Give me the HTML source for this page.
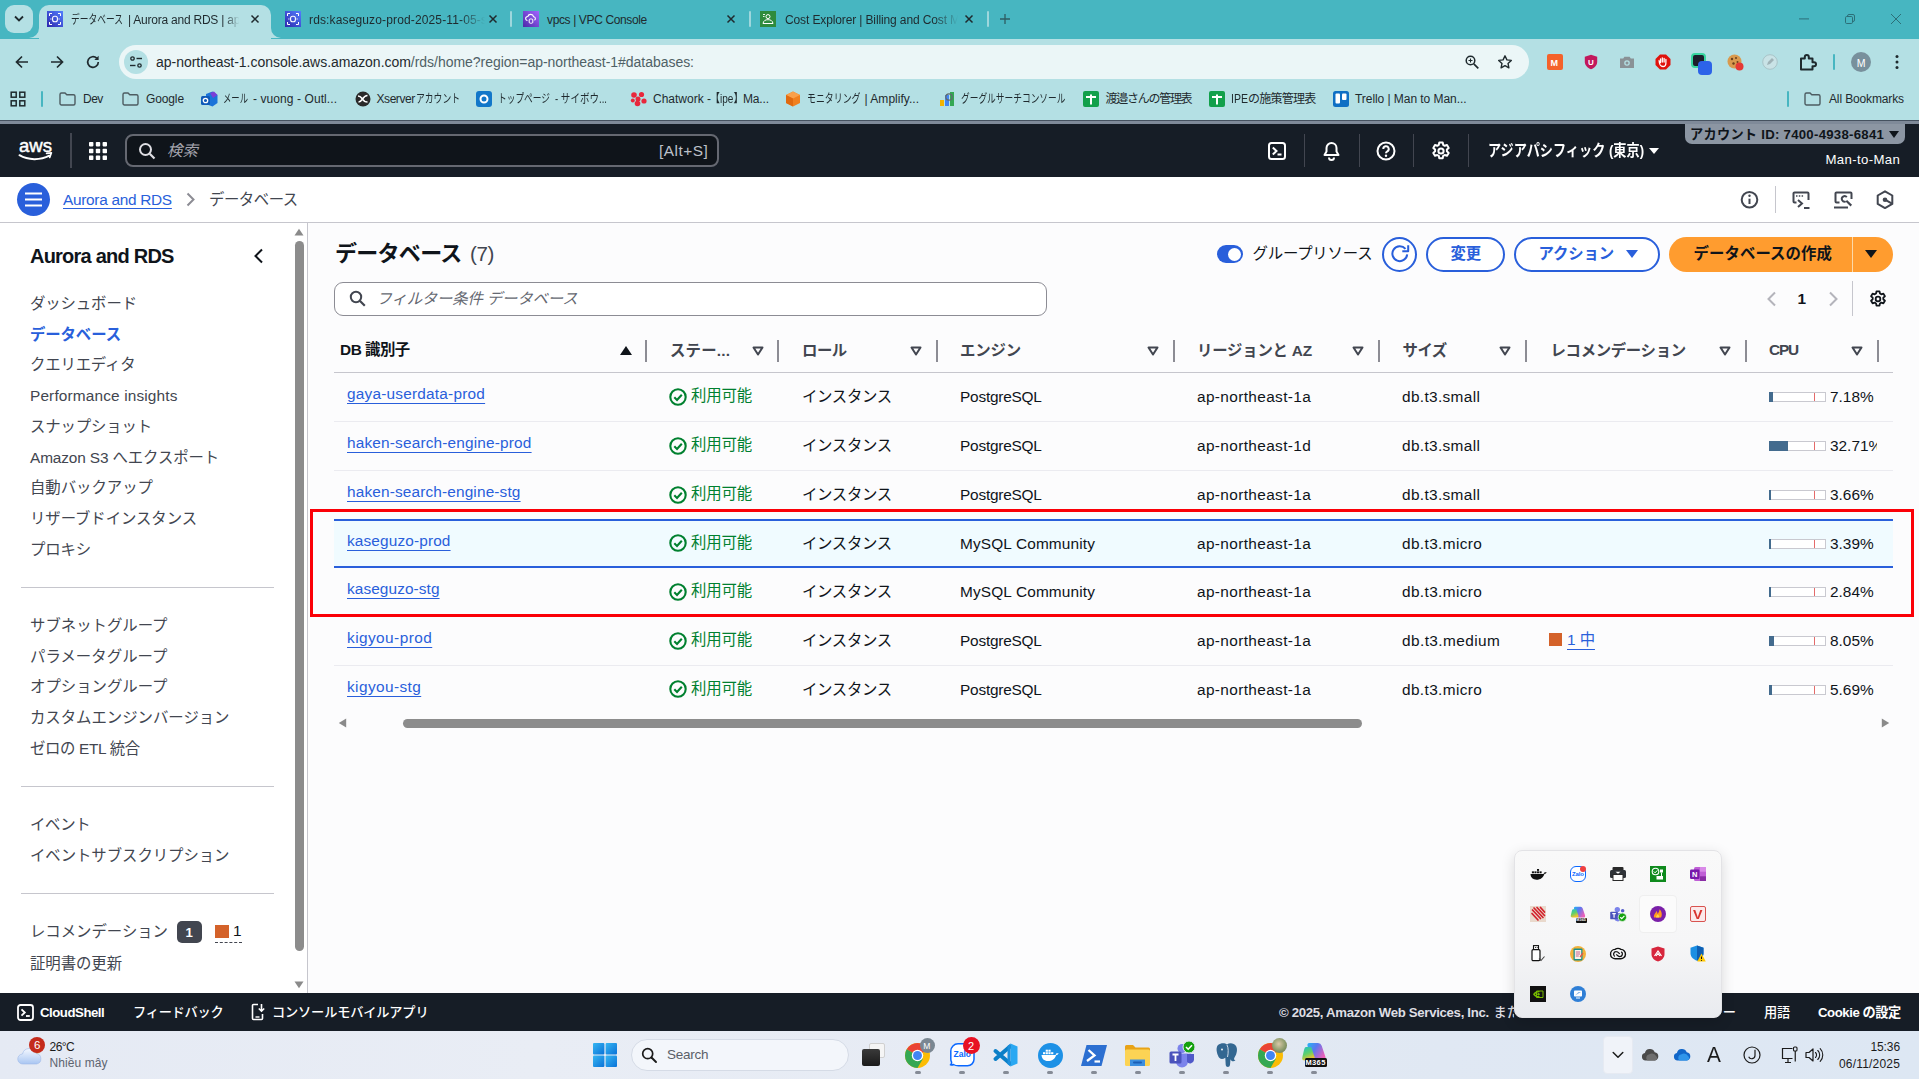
<!DOCTYPE html>
<html lang="ja">
<head>
<meta charset="utf-8">
<title>データベース | Aurora and RDS | ap-northeast-1</title>
<style>
*{box-sizing:border-box;margin:0;padding:0}
html,body{width:1919px;height:1079px;overflow:hidden;background:#fcfcfd}
body{font-family:"Liberation Sans","Noto Sans CJK JP",sans-serif;font-size:14px;color:#0f141a;position:relative}
.abs{position:absolute}
.t{position:absolute;white-space:nowrap}
.u{text-decoration:underline;text-decoration-thickness:1px;text-underline-offset:3px}
svg{position:absolute;overflow:visible}
#tabstrip{left:0;top:0;width:1919px;height:38.600px;background:#47b6c1}
#toolbar{left:0;top:38.600px;width:1919px;height:81.400px;background:#b4e0e4}
#chromeline{left:0;top:120px;width:1919px;height:4px;background:#7f8a99;border-top:1px solid #465260}
#activetab{left:39px;top:5px;width:232px;height:34px;background:#b4e0e4;border-radius:10px 10px 0 0}
#tabsearch{left:5px;top:5px;width:28px;height:28px;border-radius:9px;background:#b4e0e4}
#urlbar{left:119px;top:45px;width:1410px;height:34px;border-radius:17px;background:#ebf6f7}
#sitechip{left:124px;top:50px;width:24px;height:24px;border-radius:12px;background:#b4e0e4}
.tsep{position:absolute;top:11px;width:2px;height:16px;background:#b4e0e4;border-radius:1px;opacity:.8}
.bsep{position:absolute;width:2px;height:16px;background:#47b6c1;border-radius:1px}
#awsnav{left:0;top:124px;width:1919px;height:53px;background:#161d26}
#crumbbar{left:0;top:177px;width:1919px;height:45px;background:#fff}
#crumbline{left:0;top:221.800px;width:1919px;height:1px;background:#c6c6cd}
#sidebar{left:0;top:222px;width:307px;height:771px;background:#fff}
#sbline{left:307px;top:222px;width:1px;height:771px;background:#c6c6cd}
#main{left:308px;top:222px;width:1611px;height:771px;background:#fcfcfd}
#awsfoot{left:0;top:993px;width:1919px;height:38px;background:#161d26}
#taskbar{left:0;top:1031px;width:1919px;height:48px;background:linear-gradient(90deg,#e5eaf4 0%,#e9edf5 28%,#e6ebf4 50%,#e0e8f3 75%,#dde7f3 100%)}
.hline{position:absolute;height:1px;background:#c6c6cd}
.vsep{position:absolute;width:2px;background:#8c8c94}
.rowline{position:absolute;left:334px;width:1559px;height:1px;background:#ebebf0}
.btn{position:absolute;height:35px;border:2px solid #295fdb;border-radius:17.500px;background:#fff}
</style>
</head>
<body>
<!-- ===== browser chrome ===== -->
<div class="abs" id="tabstrip"></div><div class="abs" id="toolbar"></div><div class="abs" id="activetab"></div>
<svg style="left:29px;top:28px" width="10" height="10" viewBox="0 0 10 10"><path d="M10 0v10H0A10 10 0 0 0 10 0z" fill="#b4e0e4"/></svg>
<svg style="left:271px;top:28px" width="10" height="10" viewBox="0 0 10 10"><path d="M0 0v10h10A10 10 0 0 1 0 0z" fill="#b4e0e4"/></svg>
<div class="abs" id="tabsearch"></div><div class="abs" id="urlbar"></div><div class="abs" id="sitechip"></div><div class="abs" id="chromeline"></div>
<svg width="0" height="0"><defs><linearGradient id="gr1" x1="0" y1="1" x2="1" y2="0"><stop offset="0" stop-color="#2e27ad"/><stop offset="1" stop-color="#527fff"/></linearGradient><linearGradient id="gr2" x1="0" y1="1" x2="1" y2="0"><stop offset="0" stop-color="#4d27a8"/><stop offset="1" stop-color="#a166ff"/></linearGradient></defs></svg>
<svg style="left:13px;top:14px" width="12" height="10" viewBox="0 0 12 10"><path d="M2 2.500L6 6.500 10 2.500" fill="none" stroke="#1f2a2e" stroke-width="1.800"/></svg>
<svg style="left:47px;top:11px" width="16" height="16" viewBox="0 0 16 16"><rect width="16" height="16" fill="url(#gr1)"/><rect x="5.6" y="5.3" width="4.8" height="5.4" rx="2" fill="none" stroke="#fff" stroke-width="1.1"/><path d="M2.5 5V2.500H5M11 2.500h2.500V5M13.500 11v2.500H11M5 13.500H2.500V11" fill="none" stroke="#fff" stroke-width="1"/><path d="M3.300 8h1.200M11.500 8h1.200" stroke="#fff" stroke-width="1"/></svg>
<div class="t" style="left:71px;top:11.6px;font-size:12px;line-height:16px;color:#1f2a2e;transform:scaleX(0.7282);transform-origin:0 50%;">データベース</div><div class="t" style="left:128px;top:11.6px;font-size:12px;line-height:16px;color:#1f2a2e;letter-spacing:-0.231px;-webkit-mask-image:linear-gradient(90deg,#000 84%,transparent 96%);mask-image:linear-gradient(90deg,#000 84%,transparent 96%);">| Aurora and RDS | ap-</div><svg style="left:250px;top:14px" width="10" height="10" viewBox="0 0 10 10"><path d="M1.5 1.5l7 7M8.5 1.5l-7 7" stroke="#1f2a2e" stroke-width="1.5"/></svg>
<svg style="left:285px;top:11px" width="16" height="16" viewBox="0 0 16 16"><rect width="16" height="16" fill="url(#gr1)"/><rect x="5.6" y="5.3" width="4.8" height="5.4" rx="2" fill="none" stroke="#fff" stroke-width="1.1"/><path d="M2.5 5V2.500H5M11 2.500h2.500V5M13.500 11v2.500H11M5 13.500H2.500V11" fill="none" stroke="#fff" stroke-width="1"/><path d="M3.300 8h1.200M11.500 8h1.200" stroke="#fff" stroke-width="1"/></svg>
<div class="t" style="left:309px;top:11.6px;font-size:12px;line-height:16px;color:#1f2a2e;letter-spacing:0.140px;-webkit-mask-image:linear-gradient(90deg,#000 85%,transparent 99%);mask-image:linear-gradient(90deg,#000 85%,transparent 99%);overflow:hidden;">rds:kaseguzo-prod-2025-11-05-s</div><svg style="left:488px;top:14px" width="10" height="10" viewBox="0 0 10 10"><path d="M1.5 1.5l7 7M8.5 1.5l-7 7" stroke="#1f2a2e" stroke-width="1.5"/></svg>
<div class="tsep" style="left:510px"></div>
<svg style="left:523px;top:11px" width="16" height="16" viewBox="0 0 16 16"><rect width="16" height="16" fill="url(#gr2)"/><path d="M4.500 9.500a2 2 0 0 1 .3-4 3 3 0 0 1 5.800.3 1.900 1.900 0 0 1 .9 3.500" fill="none" stroke="#fff" stroke-width="1.100"/><rect x="6.200" y="8" width="3.600" height="4.200" rx="1" fill="none" stroke="#fff" stroke-width="1"/></svg>
<div class="t" style="left:547px;top:11.6px;font-size:12px;line-height:16px;color:#1f2a2e;letter-spacing:-0.371px;">vpcs | VPC Console</div><svg style="left:726px;top:14px" width="10" height="10" viewBox="0 0 10 10"><path d="M1.5 1.5l7 7M8.5 1.5l-7 7" stroke="#1f2a2e" stroke-width="1.5"/></svg>
<div class="tsep" style="left:749px"></div>
<svg style="left:760px;top:11px" width="16" height="16" viewBox="0 0 16 16"><rect width="16" height="16" fill="#2e8b3d"/><circle cx="8" cy="5.600" r="2" fill="none" stroke="#fff" stroke-width="1"/><path d="M3 12.500c.5-3 2.500-3.800 5-3.800s4.500.8 5 3.800z" fill="none" stroke="#fff" stroke-width="1"/><path d="M3 3.500h2M3 5.500h1.500" stroke="#fff" stroke-width=".9"/></svg>
<div class="t" style="left:785px;top:11.6px;font-size:12px;line-height:16px;color:#1f2a2e;letter-spacing:-0.125px;-webkit-mask-image:linear-gradient(90deg,#000 85%,transparent 99%);mask-image:linear-gradient(90deg,#000 85%,transparent 99%);overflow:hidden;">Cost Explorer | Billing and Cost M</div><svg style="left:964px;top:14px" width="10" height="10" viewBox="0 0 10 10"><path d="M1.5 1.5l7 7M8.5 1.5l-7 7" stroke="#1f2a2e" stroke-width="1.5"/></svg>
<div class="tsep" style="left:987px"></div>
<svg style="left:999px;top:13px" width="12" height="12" viewBox="0 0 12 12"><path d="M6 1v10M1 6h10" stroke="#2f5d63" stroke-width="1.300"/></svg>
<svg style="left:1799px;top:18px" width="10" height="2" viewBox="0 0 10 2"><path d="M0 .9h10" stroke="#2c6f78" stroke-width="1"/></svg>
<svg style="left:1845px;top:14px" width="10" height="10" viewBox="0 0 10 10"><rect x=".5" y="2.500" width="7" height="7" rx="1.200" fill="none" stroke="#2c6f78" stroke-width="1"/><path d="M2.500 2.500V2A1.500 1.500 0 0 1 4 .5h4A1.500 1.500 0 0 1 9.500 2v4A1.500 1.500 0 0 1 8 7.500h-.5" fill="none" stroke="#2c6f78" stroke-width="1"/></svg>
<svg style="left:1891px;top:14px" width="10" height="10" viewBox="0 0 10 10"><path d="M0 0l10 10M10 0L0 10" stroke="#2c6f78" stroke-width="1"/></svg>
<svg style="left:14px;top:54px" width="16" height="16" viewBox="0 0 16 16"><path d="M14 8H2.500M8 2.500L2.500 8 8 13.500" fill="none" stroke="#1f2a2e" stroke-width="1.700"/></svg>
<svg style="left:49px;top:54px" width="16" height="16" viewBox="0 0 16 16"><path d="M2 8h11.500M8 2.500L13.500 8 8 13.500" fill="none" stroke="#1f2a2e" stroke-width="1.700"/></svg>
<svg style="left:85px;top:54px" width="16" height="16" viewBox="0 0 16 16"><path d="M13.300 8A5.300 5.300 0 1 1 11.700 4.200" fill="none" stroke="#1f2a2e" stroke-width="1.700"/><path d="M13.600 1.800v4.200H9.400z" fill="#1f2a2e"/></svg>
<svg style="left:129px;top:55px" width="14" height="14" viewBox="0 0 14 14"><circle cx="3.500" cy="3.500" r="1.700" fill="none" stroke="#1f2a2e" stroke-width="1.300"/><path d="M7.500 3.500H13" stroke="#1f2a2e" stroke-width="1.400"/><circle cx="10.500" cy="10.500" r="1.700" fill="none" stroke="#1f2a2e" stroke-width="1.300"/><path d="M1 10.500h5.500" stroke="#1f2a2e" stroke-width="1.400"/></svg>
<div class="t" style="left:156px;top:53.3px;font-size:14px;line-height:18px;color:#1f2a2e;letter-spacing:-0.032px;">ap-northeast-1.console.aws.amazon.com<span style="color:#4f6166">/rds/home?region=ap-northeast-1#databases:</span></div><svg style="left:1464px;top:54px" width="16" height="16" viewBox="0 0 16 16"><circle cx="6.500" cy="6.500" r="4.300" fill="none" stroke="#1f2a2e" stroke-width="1.500"/><path d="M9.800 9.800l4.500 4.500" stroke="#1f2a2e" stroke-width="1.700"/><path d="M4.500 6.500h4M6.500 4.500v4" stroke="#1f2a2e" stroke-width="1.100"/></svg>
<svg style="left:1497px;top:54px" width="16" height="16" viewBox="0 0 16 16"><path d="M8 1.800l1.900 4.100 4.400.5-3.300 3 .9 4.400L8 11.600l-3.900 2.200.9-4.400-3.300-3 4.400-.5z" fill="none" stroke="#1f2a2e" stroke-width="1.400" stroke-linejoin="round"/></svg>
<div class="abs" style="left:1547px;top:54px;width:16px;height:16px;background:#f4622a;border-radius:2px"></div>
<div class="t" style="left:1550.5px;top:56.7px;font-size:9px;line-height:12px;color:#fff;font-weight:bold;">M</div><svg style="left:1583px;top:54px" width="16" height="16" viewBox="0 0 16 16"><path d="M8 .8l6.200 2v5c0 3.600-2.600 6.200-6.200 7.500C4.400 14 1.800 11.400 1.800 7.800v-5z" fill="#c2185b"/><text x="8" y="11" font-size="8" font-weight="bold" fill="#fff" text-anchor="middle" font-family="Liberation Sans, sans-serif">U</text></svg>
<svg style="left:1619px;top:55px" width="16" height="14" viewBox="0 0 16 14"><path d="M1 3.500h3.200L5.400 1.800h5.200l1.200 1.700H15v9.500H1z" fill="#8a9296"/><circle cx="8" cy="8" r="2.800" fill="#b4e0e4"/><circle cx="8" cy="8" r="1.500" fill="#8a9296"/></svg>
<svg style="left:1655px;top:54px" width="16" height="16" viewBox="0 0 16 16"><path d="M5 .5h6L15.500 5v6L11 15.500H5L.5 11V5z" fill="#e0120c"/><path d="M5.500 8.500V5M7.300 8V3.800M9.100 8V4.300M10.900 8.500V5.500M5.500 8L4.200 7c0 3 1.500 5.500 3.800 5.500 2 0 2.900-1.500 2.900-3.500" fill="none" stroke="#fff" stroke-width="1.300" stroke-linecap="round"/></svg>
<div class="abs" style="left:1691px;top:53px;width:15px;height:15px;border-radius:4px;background:#1d1d2b;border:2px solid #38d6a0"></div>
<div class="abs" style="left:1698px;top:61px;width:14px;height:14px;border-radius:4px;background:#2c63e8"></div>
<svg style="left:1727px;top:54px" width="17" height="17" viewBox="0 0 17 17"><circle cx="7.500" cy="7.500" r="7" fill="#d99a4e"/><circle cx="5" cy="5" r="1.200" fill="#6b3f1c"/><circle cx="9" cy="4" r="1" fill="#6b3f1c"/><circle cx="6.500" cy="9.500" r="1.200" fill="#6b3f1c"/><circle cx="10.500" cy="8" r="1" fill="#6b3f1c"/><circle cx="12.500" cy="12.500" r="4" fill="#e53935"/></svg>
<svg style="left:1762px;top:54px" width="16" height="16" viewBox="0 0 16 16"><circle cx="8" cy="8" r="7.300" fill="#c9e3e6" stroke="#a9c4c8" stroke-width="1"/><path d="M5 11l1-3 4-4 2 2-4 4z" fill="#9fb3b7"/></svg>
<svg style="left:1798px;top:52px" width="19" height="19" viewBox="0 0 19 19"><path d="M3 6.500h3.800V5a2 2 0 0 1 4 0v1.500h3.700v3.800H16a2 2 0 0 1 0 4h-1.500V17.500H3V6.500z" fill="none" stroke="#1f2a2e" stroke-width="2" stroke-linejoin="round"/></svg>
<div class="bsep" style="left:1833px;top:54px"></div>
<div class="abs" style="left:1851px;top:52px;width:20px;height:20px;border-radius:10px;background:#78909c"></div>
<div class="t" style="left:1856.7px;top:55.5px;font-size:10.5px;line-height:14px;color:#fff;">M</div><svg style="left:1895px;top:54px" width="4" height="16" viewBox="0 0 4 16"><circle cx="2" cy="2.500" r="1.500" fill="#1f2a2e"/><circle cx="2" cy="8" r="1.500" fill="#1f2a2e"/><circle cx="2" cy="13.500" r="1.500" fill="#1f2a2e"/></svg>
<svg style="left:10px;top:91px" width="16" height="16" viewBox="0 0 16 16"><g fill="none" stroke="#1f2a2e" stroke-width="1.500"><rect x="1.200" y="1.200" width="5" height="5"/><rect x="9.800" y="1.200" width="5" height="5"/><rect x="1.200" y="9.800" width="5" height="5"/><rect x="9.800" y="9.800" width="5" height="5"/></g></svg>
<div class="bsep" style="left:41px;top:91px"></div>
<svg style="left:59px;top:92px" width="17" height="14" viewBox="0 0 17 14"><path d="M1 2.500a1.500 1.500 0 0 1 1.500-1.500H6l1.800 1.800h6.700A1.500 1.500 0 0 1 16 4.300v7.200A1.500 1.500 0 0 1 14.500 13h-12A1.500 1.500 0 0 1 1 11.500z" fill="none" stroke="#4d5c61" stroke-width="1.400"/></svg>
<div class="t" style="left:83px;top:91.4px;font-size:12px;line-height:16px;color:#1f2a2e;letter-spacing:-0.537px;">Dev</div><svg style="left:122px;top:92px" width="17" height="14" viewBox="0 0 17 14"><path d="M1 2.500a1.500 1.500 0 0 1 1.500-1.500H6l1.800 1.800h6.700A1.500 1.500 0 0 1 16 4.300v7.200A1.500 1.500 0 0 1 14.500 13h-12A1.500 1.500 0 0 1 1 11.500z" fill="none" stroke="#4d5c61" stroke-width="1.400"/></svg>
<div class="t" style="left:146px;top:91.4px;font-size:12px;line-height:16px;color:#1f2a2e;letter-spacing:-0.128px;">Google</div><svg style="left:201px;top:91px" width="17" height="16" viewBox="0 0 17 16"><path d="M5 3l6.500-2.500L16.500 4v8l-5 3.500L5 13z" fill="#1a73d9"/><path d="M9 2l4-1.500L16.500 4 12 7z" fill="#7b3fd6"/><rect x="0" y="5" width="9" height="9" rx="1.500" fill="#0f5ab8"/><circle cx="4.500" cy="9.500" r="2.200" fill="none" stroke="#fff" stroke-width="1.300"/></svg>
<div class="t" style="left:223px;top:91.4px;font-size:12px;line-height:16px;color:#1f2a2e;transform:scaleX(0.6941);transform-origin:0 50%;">メール</div><div class="t" style="left:253px;top:91.4px;font-size:12px;line-height:16px;color:#1f2a2e;letter-spacing:0.079px;">- vuong - Outl...</div><svg style="left:355px;top:91px" width="16" height="16" viewBox="0 0 16 16"><circle cx="8" cy="8" r="7.500" fill="#2a2a2a"/><path d="M3 5c2 0 3 1 4 2.500S9 11 12.500 11M3.500 11c2 0 3-1.500 4-3S10 4.500 12.500 4.500" fill="none" stroke="#fff" stroke-width="1.600"/></svg>
<div class="t" style="left:376.5px;top:91.4px;font-size:12px;line-height:16px;color:#1f2a2e;letter-spacing:-0.438px;">Xserver</div><div class="t" style="left:415.5px;top:91.4px;font-size:12px;line-height:16px;color:#1f2a2e;transform:scaleX(0.7331);transform-origin:0 50%;">アカウント</div><svg style="left:476px;top:91px" width="16" height="16" viewBox="0 0 16 16"><rect width="16" height="16" rx="3" fill="#1277c9"/><circle cx="8" cy="8" r="3.500" fill="none" stroke="#fff" stroke-width="2"/></svg>
<div class="t" style="left:498px;top:91.4px;font-size:12px;line-height:16px;color:#1f2a2e;transform:scaleX(0.7246);transform-origin:0 50%;">トップページ</div><div class="t" style="left:555px;top:91.4px;font-size:12px;line-height:16px;color:#1f2a2e;transform:scaleX(0.7958);transform-origin:0 50%;">- サイボウ...</div><svg style="left:630px;top:91px" width="17" height="16" viewBox="0 0 17 16"><g fill="#e8283c"><circle cx="4" cy="4" r="2.800"/><circle cx="11.500" cy="3.500" r="2.600"/><circle cx="14" cy="10" r="2.600"/><circle cx="7.500" cy="12.500" r="2.800"/><circle cx="2.800" cy="9.500" r="2"/><circle cx="8" cy="8" r="2.500"/></g></svg>
<div class="t" style="left:653px;top:91.4px;font-size:12px;line-height:16px;color:#1f2a2e;letter-spacing:-0.002px;">Chatwork -</div><div class="t" style="left:710px;top:91.4px;font-size:12px;line-height:16px;color:#1f2a2e;transform:scaleX(0.8372);transform-origin:0 50%;">【ipe】</div><div class="t" style="left:743px;top:91.4px;font-size:12px;line-height:16px;color:#1f2a2e;letter-spacing:-0.149px;">Ma...</div><svg style="left:785px;top:91px" width="16" height="16" viewBox="0 0 16 16"><path d="M8 .5l7 3.500v8L8 15.500 1 12V4z" fill="#f0801f"/><path d="M8 .5l7 3.500-7 3.500L1 4z" fill="#f9a04a"/><path d="M8 7.500v8L1 12V4z" fill="#e06a10"/></svg>
<div class="t" style="left:806.5px;top:91.4px;font-size:12px;line-height:16px;color:#1f2a2e;transform:scaleX(0.7429);transform-origin:0 50%;">モニタリング</div><div class="t" style="left:864.5px;top:91.4px;font-size:12px;line-height:16px;color:#1f2a2e;letter-spacing:0.022px;">| Amplify...</div><svg style="left:939px;top:91px" width="17" height="16" viewBox="0 0 17 16"><rect x="1" y="9" width="4" height="6" fill="#f4b400"/><rect x="6" y="4" width="4" height="11" fill="#4285f4"/><rect x="11" y="1" width="4" height="14" fill="#34a853"/><circle cx="10" cy="6" r="3.200" fill="none" stroke="#5f6b70" stroke-width="1.300"/></svg>
<div class="t" style="left:960.5px;top:91.4px;font-size:12px;line-height:16px;color:#1f2a2e;transform:scaleX(0.7256);transform-origin:0 50%;">グーグルサーチコンソール</div><svg style="left:1083px;top:91px" width="16" height="16" viewBox="0 0 16 16"><rect width="16" height="16" rx="2" fill="#12a04b"/><path d="M3 6h10M8 3.500v10" stroke="#fff" stroke-width="2"/></svg>
<div class="t" style="left:1105.5px;top:91.4px;font-size:12px;line-height:16px;color:#1f2a2e;letter-spacing:-1.269px;">渡邉さんの管理表</div><svg style="left:1209px;top:91px" width="16" height="16" viewBox="0 0 16 16"><rect width="16" height="16" rx="2" fill="#12a04b"/><path d="M3 6h10M8 3.500v10" stroke="#fff" stroke-width="2"/></svg>
<div class="t" style="left:1231px;top:91.4px;font-size:12px;line-height:16px;color:#1f2a2e;transform:scaleX(0.8788);transform-origin:0 50%;">IPE</div><div class="t" style="left:1248px;top:91.4px;font-size:12px;line-height:16px;color:#1f2a2e;letter-spacing:-0.730px;">の施策管理表</div><svg style="left:1333px;top:91px" width="16" height="16" viewBox="0 0 16 16"><rect width="16" height="16" rx="2.500" fill="#0e6fc4"/><rect x="2.500" y="2.500" width="4.500" height="10" rx="1" fill="#fff"/><rect x="9" y="2.500" width="4.500" height="6.500" rx="1" fill="#fff"/></svg>
<div class="t" style="left:1355px;top:91.4px;font-size:12px;line-height:16px;color:#1f2a2e;letter-spacing:-0.057px;">Trello | Man to Man...</div><div class="bsep" style="left:1787px;top:91px"></div>
<svg style="left:1804px;top:92px" width="17" height="14" viewBox="0 0 17 14"><path d="M1 2.500a1.500 1.500 0 0 1 1.500-1.500H6l1.800 1.800h6.700A1.500 1.500 0 0 1 16 4.300v7.200A1.500 1.500 0 0 1 14.500 13h-12A1.500 1.500 0 0 1 1 11.500z" fill="none" stroke="#4d5c61" stroke-width="1.400"/></svg>
<div class="t" style="left:1829px;top:91.4px;font-size:12px;line-height:16px;color:#1f2a2e;letter-spacing:-0.135px;">All Bookmarks</div><!-- ===== AWS console ===== -->
<div class="abs" id="awsnav"></div><div class="abs" id="crumbbar"></div><div class="abs" id="sidebar"></div><div class="abs" id="sbline"></div><div class="abs" id="main"></div><div class="abs" id="crumbline"></div>
<svg style="left:18px;top:138px" width="36" height="24" viewBox="0 0 36 24"><text x="1" y="13.500" font-family="Liberation Sans, sans-serif" font-size="18" fill="#fff" stroke="#fff" stroke-width=".45" textLength="33" lengthAdjust="spacingAndGlyphs">aws</text><path d="M1.500 17.200c8.500 5.200 21 5.200 29.800 0.500" fill="none" stroke="#fff" stroke-width="2" stroke-linecap="round"/><path d="M28.600 15.300l4.800-.5-1.700 4.600" fill="none" stroke="#fff" stroke-width="1.700" stroke-linecap="round" stroke-linejoin="round"/></svg>
<div class="abs" style="left:70px;top:133px;width:2px;height:35px;background:#424650"></div>
<svg style="left:89px;top:142px" width="18" height="18" viewBox="0 0 18 18"><rect x="0" y="0" width="4.400" height="4.400" rx=".8" fill="#fff"/><rect x="6.8" y="0" width="4.400" height="4.400" rx=".8" fill="#fff"/><rect x="13.6" y="0" width="4.400" height="4.400" rx=".8" fill="#fff"/><rect x="0" y="6.8" width="4.400" height="4.400" rx=".8" fill="#fff"/><rect x="6.8" y="6.8" width="4.400" height="4.400" rx=".8" fill="#fff"/><rect x="13.6" y="6.8" width="4.400" height="4.400" rx=".8" fill="#fff"/><rect x="0" y="13.6" width="4.400" height="4.400" rx=".8" fill="#fff"/><rect x="6.8" y="13.6" width="4.400" height="4.400" rx=".8" fill="#fff"/><rect x="13.6" y="13.6" width="4.400" height="4.400" rx=".8" fill="#fff"/></svg>
<div class="abs" style="left:125px;top:134px;width:594px;height:33px;border:2px solid #656871;border-radius:8px;background:#0f141a"></div>
<svg style="left:138px;top:142px" width="18" height="18" viewBox="0 0 18 18"><circle cx="7.500" cy="7.500" r="5.500" fill="none" stroke="#dedee3" stroke-width="2"/><path d="M11.700 11.700l4.800 4.800" stroke="#dedee3" stroke-width="2.200"/></svg>
<div class="t" style="left:167px;top:140.8px;font-size:15.4px;line-height:20px;color:#a4a4ad;font-style:italic;letter-spacing:0.135px;">検索</div><div class="t" style="left:659px;top:140.8px;font-size:15.4px;line-height:20px;color:#bcc0c9;letter-spacing:0.495px;">[Alt+S]</div><svg style="left:1268px;top:142px" width="18" height="18" viewBox="0 0 18 18"><rect x="1" y="1" width="16" height="16" rx="2.500" fill="none" stroke="#fff" stroke-width="2"/><path d="M4.800 5.500l3.700 3.500-3.700 3.500" fill="none" stroke="#fff" stroke-width="2"/><path d="M9.500 12.500h4" stroke="#fff" stroke-width="2"/></svg>
<div class="abs" style="left:1304px;top:134px;width:1px;height:33px;background:#424650"></div>
<div class="abs" style="left:1359px;top:134px;width:1px;height:33px;background:#424650"></div>
<div class="abs" style="left:1413px;top:134px;width:1px;height:33px;background:#424650"></div>
<div class="abs" style="left:1468px;top:134px;width:1px;height:33px;background:#424650"></div>
<svg style="left:1322px;top:141px" width="19" height="20" viewBox="0 0 19 20"><path d="M9.500 2a5 5 0 0 0-5 5v3.500L2.500 14h14l-2-3.500V7a5 5 0 0 0-5-5z" fill="none" stroke="#fff" stroke-width="2" stroke-linejoin="round"/><path d="M7 16.500a2.500 2.500 0 0 0 5 0" fill="none" stroke="#fff" stroke-width="2"/></svg>
<svg style="left:1376px;top:141px" width="20" height="20" viewBox="0 0 20 20"><circle cx="10" cy="10" r="8.500" fill="none" stroke="#fff" stroke-width="2"/><path d="M7.300 8a2.700 2.700 0 1 1 4 2.300c-.9.500-1.300 1-1.300 2" fill="none" stroke="#fff" stroke-width="2"/><circle cx="10" cy="14.800" r="1.200" fill="#fff"/></svg>
<svg style="left:1430.5px;top:141px" width="20" height="20" viewBox="0 0 20 20"><path d="M8.300 1.500h3.400l.5 2.400 1.500.9 2.300-.8 1.700 2.900-1.800 1.600v1.800l1.800 1.600-1.700 2.900-2.300-.8-1.500.9-.5 2.400H8.300l-.5-2.400-1.500-.9-2.300.8-1.700-2.900 1.800-1.600V8.500L2.300 6.900 4 4l2.300.8 1.500-.9z" fill="none" stroke="#fff" stroke-width="2" stroke-linejoin="round"/><circle cx="10" cy="10" r="2.600" fill="none" stroke="#fff" stroke-width="2"/></svg>
<div class="t" style="left:1488px;top:141.3px;font-size:15.4px;line-height:20px;color:#fff;font-weight:bold;transform:scaleX(0.8544);transform-origin:0 50%;">アジアパシフィック (東京)</div><svg style="left:1648.5px;top:148px" width="10" height="6" viewBox="0 0 10 6"><path d="M0 0h10 L5 6 z" fill="#fff"/></svg>
<div class="abs" style="left:1685px;top:124px;width:220px;height:20px;background:#8c96a3;border-radius:0 0 7px 7px"></div>
<div class="t" style="left:1690px;top:126.1px;font-size:13.2px;line-height:17px;color:#0f141a;font-weight:bold;letter-spacing:0.271px;">アカウント ID: 7400-4938-6841</div><svg style="left:1889px;top:131px" width="10" height="7" viewBox="0 0 10 7"><path d="M0 0h10 L5 7 z" fill="#0f141a"/></svg>
<div class="t" style="left:1825.5px;top:151.3px;font-size:13.2px;line-height:17px;color:#fff;letter-spacing:0.359px;">Man-to-Man</div><div class="abs" style="left:17px;top:183px;width:33px;height:33px;border-radius:17px;background:#295fdb"></div>
<svg style="left:25px;top:192px" width="17" height="15" viewBox="0 0 17 15"><path d="M0 1.500h17M0 7.500h17M0 13.500h17" stroke="#fff" stroke-width="2.200"/></svg>
<div class="t u" style="left:63px;top:189.6px;font-size:15.4px;line-height:20px;color:#295fdb;letter-spacing:-0.291px;">Aurora and RDS</div><svg style="left:186px;top:192px" width="10" height="15" viewBox="0 0 10 15"><path d="M1.500 1.500l6 6-6 6" fill="none" stroke="#8c8c94" stroke-width="2"/></svg>
<div class="t" style="left:209px;top:189.6px;font-size:15.4px;line-height:20px;color:#424650;letter-spacing:-0.469px;">データベース</div><svg style="left:1739.800px;top:190px" width="19" height="19" viewBox="0 0 19 19"><circle cx="9.500" cy="9.700" r="7.800" fill="none" stroke="#424650" stroke-width="2"/><path d="M9.500 8.700v5.300" stroke="#424650" stroke-width="2"/><circle cx="9.500" cy="5.800" r="1.200" fill="#424650"/></svg>
<div class="abs" style="left:1775px;top:186px;width:1px;height:27px;background:#c6c6cd"></div>
<svg style="left:1791.800px;top:190.500px" width="18" height="19" viewBox="0 0 18 19"><path d="M4.500 11.500H2.500a1 1 0 0 1-1-1V2.500a1 1 0 0 1 1-1h13a1 1 0 0 1 1 1V9" fill="none" stroke="#424650" stroke-width="2"/><path d="M4 5h1.500M6.800 5h1.500M9.600 5h1.500" stroke="#424650" stroke-width="1.600"/><path d="M6 9l4 3.500-4 3.500" fill="none" stroke="#424650" stroke-width="2"/><path d="M12 17h5.500" stroke="#424650" stroke-width="2"/></svg>
<svg style="left:1834px;top:190.500px" width="19" height="19" viewBox="0 0 19 19"><path d="M5.500 11.500h-3a1 1 0 0 1-1-1v-8a1 1 0 0 1 1-1h14a1 1 0 0 1 1 1V8" fill="none" stroke="#424650" stroke-width="2"/><path d="M0 16.500h14" stroke="#424650" stroke-width="2"/><path d="M12.800 6.200a2.800 2.800 0 1 0-1 4.300" fill="none" stroke="#424650" stroke-width="1.900"/><path d="M12.300 9.800l5 4.800" stroke="#424650" stroke-width="2.200"/></svg>
<svg style="left:1876px;top:190px" width="18" height="19" viewBox="0 0 18 19"><path d="M9 1.300l7.300 4.200v8.400L9 18.100l-7.300-4.200V5.500z" fill="none" stroke="#424650" stroke-width="2" stroke-linejoin="round"/><circle cx="9" cy="9.700" r="2.300" fill="#424650"/><path d="M9 9.700l7 4" stroke="#424650" stroke-width="2"/></svg>
<div class="t" style="left:30px;top:242.6px;font-size:20px;line-height:26px;color:#0f141a;font-weight:bold;letter-spacing:-0.775px;">Aurora and RDS</div><svg style="left:253px;top:248px" width="11" height="16" viewBox="0 0 11 16"><path d="M9 1.500L2.500 8 9 14.500" fill="none" stroke="#0f141a" stroke-width="2"/></svg>
<div class="t" style="left:30px;top:294.1px;font-size:15.4px;line-height:20px;color:#424650;letter-spacing:-0.115px;">ダッシュボード</div><div class="t" style="left:30px;top:324.7px;font-size:15.4px;line-height:20px;color:#295fdb;font-weight:bold;letter-spacing:-0.105px;">データベース</div><div class="t" style="left:30px;top:355.3px;font-size:15.4px;line-height:20px;color:#424650;letter-spacing:-0.180px;">クエリエディタ</div><div class="t" style="left:30px;top:386.3px;font-size:15.4px;line-height:20px;color:#424650;letter-spacing:0.150px;">Performance insights</div><div class="t" style="left:30px;top:416.8px;font-size:15.4px;line-height:20px;color:#424650;letter-spacing:-0.152px;">スナップショット</div><div class="t" style="left:30px;top:448.1px;font-size:15.4px;line-height:20px;color:#424650;letter-spacing:-0.128px;">Amazon S3 へエクスポート</div><div class="t" style="left:30px;top:478.1px;font-size:15.4px;line-height:20px;color:#424650;letter-spacing:-0.019px;">自動バックアップ</div><div class="t" style="left:30px;top:508.9px;font-size:15.4px;line-height:20px;color:#424650;letter-spacing:-0.073px;">リザーブドインスタンス</div><div class="t" style="left:30px;top:539.8px;font-size:15.4px;line-height:20px;color:#424650;letter-spacing:-0.165px;">プロキシ</div><div class="t" style="left:30px;top:616.1px;font-size:15.4px;line-height:20px;color:#424650;letter-spacing:-0.011px;">サブネットグループ</div><div class="t" style="left:30px;top:646.8px;font-size:15.4px;line-height:20px;color:#424650;letter-spacing:0.042px;">パラメータグループ</div><div class="t" style="left:30px;top:677.4px;font-size:15.4px;line-height:20px;color:#424650;letter-spacing:-0.011px;">オプショングループ</div><div class="t" style="left:30px;top:708.1px;font-size:15.4px;line-height:20px;color:#424650;letter-spacing:-0.022px;">カスタムエンジンバージョン</div><div class="t" style="left:30px;top:739.1px;font-size:15.4px;line-height:20px;color:#424650;letter-spacing:-0.334px;">ゼロの ETL 統合</div><div class="t" style="left:30px;top:815.1px;font-size:15.4px;line-height:20px;color:#424650;letter-spacing:-0.308px;">イベント</div><div class="t" style="left:30px;top:846.1px;font-size:15.4px;line-height:20px;color:#424650;letter-spacing:-0.048px;">イベントサブスクリプション</div><div class="t" style="left:30px;top:922.1px;font-size:15.4px;line-height:20px;color:#424650;letter-spacing:-0.026px;">レコメンデーション</div><div class="t" style="left:30px;top:954.1px;font-size:15.4px;line-height:20px;color:#424650;letter-spacing:-0.065px;">証明書の更新</div><div class="hline" style="left:21px;top:587px;width:253px"></div>
<div class="hline" style="left:21px;top:786px;width:253px"></div>
<div class="hline" style="left:21px;top:893px;width:253px"></div>
<div class="abs" style="left:177px;top:921px;width:25px;height:22px;border-radius:5px;background:#424650"></div>
<div class="t" style="left:185.5px;top:923.8px;font-size:13.2px;line-height:17px;color:#fff;font-weight:bold;">1</div><div class="abs" style="left:215px;top:925px;width:14px;height:13px;background:#d4622a"></div>
<div class="t" style="left:233px;top:921.1px;font-size:15.4px;line-height:20px;color:#0f141a;">1</div><div class="abs" style="left:215px;top:942px;width:27px;height:0;border-top:1px dashed #424650"></div>
<svg style="left:294px;top:227.500px" width="10" height="8" viewBox="0 0 10 8"><path d="M5 .8L9.500 7.500h-9z" fill="#8a8a8a"/></svg>
<div class="abs" style="left:295px;top:241px;width:8.500px;height:710px;border-radius:4.500px;background:#8c8c8c"></div>
<svg style="left:294px;top:981px" width="10" height="8" viewBox="0 0 10 8"><path d="M5 7.200L.5.500h9z" fill="#8a8a8a"/></svg>
<div class="t" style="left:335px;top:238.7px;font-size:22px;line-height:29px;color:#0f141a;font-weight:bold;letter-spacing:-0.710px;">データベース</div><div class="t" style="left:470px;top:239.9px;font-size:20.5px;line-height:27px;color:#424650;letter-spacing:-0.425px;">(7)</div><div class="abs" style="left:1217px;top:245px;width:26px;height:18px;border-radius:9px;background:#295fdb"></div>
<div class="abs" style="left:1227.700px;top:247.500px;width:13.300px;height:13.300px;border-radius:7px;background:#fff"></div>
<div class="t" style="left:1252.5px;top:243.8px;font-size:15.4px;line-height:20px;color:#0f141a;letter-spacing:-0.192px;">グループリソース</div><div class="btn" style="left:1382px;top:237px;width:35px"></div>
<svg style="left:1390px;top:244px" width="20" height="20" viewBox="0 0 20 20"><path d="M17.170 10.350A7.400 7.400 0 1 1 15.470 4.940" fill="none" stroke="#295fdb" stroke-width="2"/><path d="M18.200 1.300V7.200H12.300" fill="none" stroke="#295fdb" stroke-width="2" stroke-linejoin="round"/></svg>
<div class="btn" style="left:1426px;top:237px;width:79px"></div>
<div class="t" style="left:1450.5px;top:243.8px;font-size:15.4px;line-height:20px;color:#295fdb;font-weight:bold;letter-spacing:-0.198px;">変更</div><div class="btn" style="left:1514px;top:237px;width:146px"></div>
<div class="t" style="left:1538.5px;top:243.8px;font-size:15.4px;line-height:20px;color:#295fdb;font-weight:bold;letter-spacing:-0.153px;">アクション</div><svg style="left:1625.5px;top:249.5px" width="12" height="8" viewBox="0 0 12 8"><path d="M0 0h12 L6 8 z" fill="#295fdb"/></svg>
<div class="abs" style="left:1669px;top:237px;width:182.500px;height:35px;border-radius:17.500px 0 0 17.500px;background:#ff9c2f"></div>
<div class="abs" style="left:1853px;top:237px;width:40px;height:35px;border-radius:0 17.500px 17.500px 0;background:#ff9c2f"></div>
<div class="abs" style="left:1851.500px;top:237px;width:1.500px;height:35px;background:#fcd9a8"></div>
<div class="t" style="left:1693.5px;top:243.8px;font-size:15.4px;line-height:20px;color:#0f141a;font-weight:bold;letter-spacing:0.088px;">データベースの作成</div><svg style="left:1865px;top:249.5px" width="12" height="8" viewBox="0 0 12 8"><path d="M0 0h12 L6 8 z" fill="#0f141a"/></svg>
<div class="abs" style="left:334px;top:281.500px;width:713px;height:34.500px;border:1px solid #8c8c94;border-radius:9px;background:#fff"></div>
<svg style="left:349px;top:290px" width="17" height="17" viewBox="0 0 17 17"><circle cx="7" cy="7" r="5.200" fill="none" stroke="#424650" stroke-width="2"/><path d="M11 11l4.800 4.800" stroke="#424650" stroke-width="2.200"/></svg>
<div class="t" style="left:376.5px;top:288.6px;font-size:15.4px;line-height:20px;color:#656871;font-style:italic;letter-spacing:-0.169px;">フィルター条件 データベース</div><svg style="left:1766px;top:290.500px" width="11" height="16" viewBox="0 0 11 16"><path d="M9 1.500L2.500 8 9 14.500" fill="none" stroke="#b4b4bb" stroke-width="2"/></svg>
<div class="t" style="left:1797.5px;top:288.6px;font-size:15.4px;line-height:20px;color:#0f141a;font-weight:bold;">1</div><svg style="left:1828px;top:290.500px" width="11" height="16" viewBox="0 0 11 16"><path d="M2 1.500L8.500 8 2 14.500" fill="none" stroke="#b4b4bb" stroke-width="2"/></svg>
<div class="abs" style="left:1852px;top:281px;width:1px;height:35px;background:#c6c6cd"></div>
<svg style="left:1868.5px;top:289.5px" width="18" height="18" viewBox="0 0 20 20"><path d="M8.300 1.500h3.400l.5 2.400 1.500.9 2.300-.8 1.700 2.900-1.800 1.600v1.800l1.800 1.600-1.700 2.900-2.300-.8-1.500.9-.5 2.400H8.300l-.5-2.400-1.500-.9-2.300.8-1.700-2.900 1.800-1.600V8.500L2.300 6.900 4 4l2.300.8 1.500-.9z" fill="none" stroke="#0f141a" stroke-width="2" stroke-linejoin="round"/><circle cx="10" cy="10" r="2.600" fill="none" stroke="#0f141a" stroke-width="2"/></svg>
<div class="t" style="left:340px;top:340.0px;font-size:15.4px;line-height:20px;color:#0f141a;font-weight:bold;letter-spacing:-0.489px;">DB 識別子</div><svg style="left:620px;top:345.5px" width="12" height="9" viewBox="0 0 12 9"><path d="M6 0L12 9H0z" fill="#0f141a"/></svg>
<div class="vsep" style="left:645px;top:340px;height:22px"></div>
<div class="t" style="left:670px;top:340.8px;font-size:15.4px;line-height:20px;color:#424650;font-weight:bold;letter-spacing:0.182px;">ステー...</div><svg style="left:752px;top:345.5px" width="12" height="10" viewBox="0 0 12 10"><path d="M1.500 1.500h9L6 8.500z" fill="none" stroke="#424650" stroke-width="2" stroke-linejoin="round"/></svg>
<div class="vsep" style="left:777px;top:340px;height:22px"></div>
<div class="t" style="left:802px;top:340.8px;font-size:15.4px;line-height:20px;color:#424650;font-weight:bold;letter-spacing:-0.475px;">ロール</div><svg style="left:910px;top:345.5px" width="12" height="10" viewBox="0 0 12 10"><path d="M1.500 1.500h9L6 8.500z" fill="none" stroke="#424650" stroke-width="2" stroke-linejoin="round"/></svg>
<div class="vsep" style="left:936px;top:340px;height:22px"></div>
<div class="t" style="left:960px;top:340.8px;font-size:15.4px;line-height:20px;color:#424650;font-weight:bold;letter-spacing:-0.165px;">エンジン</div><svg style="left:1147px;top:345.5px" width="12" height="10" viewBox="0 0 12 10"><path d="M1.500 1.500h9L6 8.500z" fill="none" stroke="#424650" stroke-width="2" stroke-linejoin="round"/></svg>
<div class="vsep" style="left:1173px;top:340px;height:22px"></div>
<div class="t" style="left:1197px;top:340.8px;font-size:15.4px;line-height:20px;color:#424650;font-weight:bold;letter-spacing:-0.215px;">リージョンと AZ</div><svg style="left:1352px;top:345.5px" width="12" height="10" viewBox="0 0 12 10"><path d="M1.500 1.500h9L6 8.500z" fill="none" stroke="#424650" stroke-width="2" stroke-linejoin="round"/></svg>
<div class="vsep" style="left:1378px;top:340px;height:22px"></div>
<div class="t" style="left:1402.5px;top:340.8px;font-size:15.4px;line-height:20px;color:#424650;font-weight:bold;letter-spacing:-0.487px;">サイズ</div><svg style="left:1499px;top:345.5px" width="12" height="10" viewBox="0 0 12 10"><path d="M1.500 1.500h9L6 8.500z" fill="none" stroke="#424650" stroke-width="2" stroke-linejoin="round"/></svg>
<div class="vsep" style="left:1525px;top:340px;height:22px"></div>
<div class="t" style="left:1550.5px;top:340.8px;font-size:15.4px;line-height:20px;color:#424650;font-weight:bold;letter-spacing:-0.320px;">レコメンデーション</div><svg style="left:1719px;top:345.5px" width="12" height="10" viewBox="0 0 12 10"><path d="M1.500 1.500h9L6 8.500z" fill="none" stroke="#424650" stroke-width="2" stroke-linejoin="round"/></svg>
<div class="vsep" style="left:1745px;top:340px;height:22px"></div>
<div class="t" style="left:1769px;top:340.0px;font-size:15.4px;line-height:20px;color:#424650;font-weight:bold;letter-spacing:-1.200px;">CPU</div><svg style="left:1851px;top:345.5px" width="12" height="10" viewBox="0 0 12 10"><path d="M1.500 1.500h9L6 8.500z" fill="none" stroke="#424650" stroke-width="2" stroke-linejoin="round"/></svg>
<div class="vsep" style="left:1877px;top:340px;height:22px"></div>
<div class="hline" style="left:334px;top:372px;width:1559px"></div>
<div class="abs" style="left:334px;top:519px;width:1559px;height:49px;background:#f0fbff;border-top:2px solid #295fdb;border-bottom:2px solid #295fdb"></div>
<div class="rowline" style="top:421px"></div>
<div class="rowline" style="top:470px"></div>
<div class="rowline" style="top:616px"></div>
<div class="rowline" style="top:665px"></div>
<div class="t u" style="left:347px;top:383.7px;font-size:15.4px;line-height:20px;color:#295fdb;letter-spacing:0.210px;text-underline-offset:3.500px;">gaya-userdata-prod</div><svg style="left:668.6px;top:387.6px" width="18" height="18" viewBox="0 0 18 18"><circle cx="9" cy="9" r="7.700" fill="none" stroke="#00802f" stroke-width="2.100"/><path d="M5.300 9.300l2.700 2.600 4.800-5.200" fill="none" stroke="#00802f" stroke-width="2.100"/></svg>
<div class="t" style="left:691px;top:385.9px;font-size:15.4px;line-height:20px;color:#00802f;letter-spacing:-0.165px;">利用可能</div><div class="t" style="left:802px;top:386.9px;font-size:15.4px;line-height:20px;color:#0f141a;letter-spacing:-0.315px;">インスタンス</div><div class="t" style="left:960px;top:386.9px;font-size:15.4px;line-height:20px;color:#0f141a;letter-spacing:-0.215px;">PostgreSQL</div><div class="t" style="left:1197px;top:386.9px;font-size:15.4px;line-height:20px;color:#0f141a;letter-spacing:0.367px;">ap-northeast-1a</div><div class="t" style="left:1402px;top:386.9px;font-size:15.4px;line-height:20px;color:#0f141a;letter-spacing:0.341px;">db.t3.small</div><div class="abs" style="left:1769px;top:392px;width:57px;height:10px;border:1px solid #c9c9d0;background:#fff"></div>
<div class="abs" style="left:1769px;top:392px;width:4.0926px;height:10px;background:#436b8e"></div>
<div class="abs" style="left:1814px;top:393px;width:1px;height:8px;background:#e46a6a"></div>
<div class="t" style="left:1830px;top:386.9px;font-size:15.4px;line-height:20px;color:#0f141a;width:47px;overflow:hidden;">7.18%</div><div class="t u" style="left:347px;top:432.6px;font-size:15.4px;line-height:20px;color:#295fdb;letter-spacing:0.169px;text-underline-offset:3.500px;">haken-search-engine-prod</div><svg style="left:668.6px;top:436.5px" width="18" height="18" viewBox="0 0 18 18"><circle cx="9" cy="9" r="7.700" fill="none" stroke="#00802f" stroke-width="2.100"/><path d="M5.300 9.300l2.700 2.600 4.800-5.200" fill="none" stroke="#00802f" stroke-width="2.100"/></svg>
<div class="t" style="left:691px;top:434.8px;font-size:15.4px;line-height:20px;color:#00802f;letter-spacing:-0.165px;">利用可能</div><div class="t" style="left:802px;top:435.8px;font-size:15.4px;line-height:20px;color:#0f141a;letter-spacing:-0.315px;">インスタンス</div><div class="t" style="left:960px;top:435.8px;font-size:15.4px;line-height:20px;color:#0f141a;letter-spacing:-0.215px;">PostgreSQL</div><div class="t" style="left:1197px;top:435.8px;font-size:15.4px;line-height:20px;color:#0f141a;letter-spacing:0.367px;">ap-northeast-1d</div><div class="t" style="left:1402px;top:435.8px;font-size:15.4px;line-height:20px;color:#0f141a;letter-spacing:0.341px;">db.t3.small</div><div class="abs" style="left:1769px;top:440.9px;width:57px;height:10px;border:1px solid #c9c9d0;background:#fff"></div>
<div class="abs" style="left:1769px;top:440.9px;width:18.6447px;height:10px;background:#436b8e"></div>
<div class="abs" style="left:1814px;top:441.9px;width:1px;height:8px;background:#e46a6a"></div>
<div class="t" style="left:1830px;top:435.8px;font-size:15.4px;line-height:20px;color:#0f141a;width:47px;overflow:hidden;">32.71%</div><div class="t u" style="left:347px;top:481.6px;font-size:15.4px;line-height:20px;color:#295fdb;letter-spacing:0.144px;text-underline-offset:3.500px;">haken-search-engine-stg</div><svg style="left:668.6px;top:485.5px" width="18" height="18" viewBox="0 0 18 18"><circle cx="9" cy="9" r="7.700" fill="none" stroke="#00802f" stroke-width="2.100"/><path d="M5.300 9.300l2.700 2.600 4.800-5.200" fill="none" stroke="#00802f" stroke-width="2.100"/></svg>
<div class="t" style="left:691px;top:483.8px;font-size:15.4px;line-height:20px;color:#00802f;letter-spacing:-0.165px;">利用可能</div><div class="t" style="left:802px;top:484.8px;font-size:15.4px;line-height:20px;color:#0f141a;letter-spacing:-0.315px;">インスタンス</div><div class="t" style="left:960px;top:484.8px;font-size:15.4px;line-height:20px;color:#0f141a;letter-spacing:-0.215px;">PostgreSQL</div><div class="t" style="left:1197px;top:484.8px;font-size:15.4px;line-height:20px;color:#0f141a;letter-spacing:0.367px;">ap-northeast-1a</div><div class="t" style="left:1402px;top:484.8px;font-size:15.4px;line-height:20px;color:#0f141a;letter-spacing:0.341px;">db.t3.small</div><div class="abs" style="left:1769px;top:489.9px;width:57px;height:10px;border:1px solid #c9c9d0;background:#fff"></div>
<div class="abs" style="left:1769px;top:489.9px;width:2.0862px;height:10px;background:#436b8e"></div>
<div class="abs" style="left:1814px;top:490.9px;width:1px;height:8px;background:#e46a6a"></div>
<div class="t" style="left:1830px;top:484.8px;font-size:15.4px;line-height:20px;color:#0f141a;width:47px;overflow:hidden;">3.66%</div><div class="t u" style="left:347px;top:530.5px;font-size:15.4px;line-height:20px;color:#295fdb;letter-spacing:0.134px;text-underline-offset:3.500px;">kaseguzo-prod</div><svg style="left:668.6px;top:534.4px" width="18" height="18" viewBox="0 0 18 18"><circle cx="9" cy="9" r="7.700" fill="none" stroke="#00802f" stroke-width="2.100"/><path d="M5.300 9.300l2.700 2.600 4.800-5.200" fill="none" stroke="#00802f" stroke-width="2.100"/></svg>
<div class="t" style="left:691px;top:532.7px;font-size:15.4px;line-height:20px;color:#00802f;letter-spacing:-0.165px;">利用可能</div><div class="t" style="left:802px;top:533.7px;font-size:15.4px;line-height:20px;color:#0f141a;letter-spacing:-0.315px;">インスタンス</div><div class="t" style="left:960px;top:533.7px;font-size:15.4px;line-height:20px;color:#0f141a;letter-spacing:0.149px;">MySQL Community</div><div class="t" style="left:1197px;top:533.7px;font-size:15.4px;line-height:20px;color:#0f141a;letter-spacing:0.367px;">ap-northeast-1a</div><div class="t" style="left:1402px;top:533.7px;font-size:15.4px;line-height:20px;color:#0f141a;letter-spacing:0.368px;">db.t3.micro</div><div class="abs" style="left:1769px;top:538.8px;width:57px;height:10px;border:1px solid #c9c9d0;background:#fff"></div>
<div class="abs" style="left:1769px;top:538.8px;width:1.9323px;height:10px;background:#436b8e"></div>
<div class="abs" style="left:1814px;top:539.8px;width:1px;height:8px;background:#e46a6a"></div>
<div class="t" style="left:1830px;top:533.7px;font-size:15.4px;line-height:20px;color:#0f141a;width:47px;overflow:hidden;">3.39%</div><div class="t u" style="left:347px;top:578.7px;font-size:15.4px;line-height:20px;color:#295fdb;letter-spacing:0.083px;text-underline-offset:3.500px;">kaseguzo-stg</div><svg style="left:668.6px;top:582.6px" width="18" height="18" viewBox="0 0 18 18"><circle cx="9" cy="9" r="7.700" fill="none" stroke="#00802f" stroke-width="2.100"/><path d="M5.300 9.300l2.700 2.600 4.800-5.200" fill="none" stroke="#00802f" stroke-width="2.100"/></svg>
<div class="t" style="left:691px;top:580.9px;font-size:15.4px;line-height:20px;color:#00802f;letter-spacing:-0.165px;">利用可能</div><div class="t" style="left:802px;top:581.9px;font-size:15.4px;line-height:20px;color:#0f141a;letter-spacing:-0.315px;">インスタンス</div><div class="t" style="left:960px;top:581.9px;font-size:15.4px;line-height:20px;color:#0f141a;letter-spacing:0.149px;">MySQL Community</div><div class="t" style="left:1197px;top:581.9px;font-size:15.4px;line-height:20px;color:#0f141a;letter-spacing:0.367px;">ap-northeast-1a</div><div class="t" style="left:1402px;top:581.9px;font-size:15.4px;line-height:20px;color:#0f141a;letter-spacing:0.368px;">db.t3.micro</div><div class="abs" style="left:1769px;top:587px;width:57px;height:10px;border:1px solid #c9c9d0;background:#fff"></div>
<div class="abs" style="left:1769px;top:587px;width:1.8px;height:10px;background:#436b8e"></div>
<div class="abs" style="left:1814px;top:588px;width:1px;height:8px;background:#e46a6a"></div>
<div class="t" style="left:1830px;top:581.9px;font-size:15.4px;line-height:20px;color:#0f141a;width:47px;overflow:hidden;">2.84%</div><div class="t u" style="left:347px;top:627.6px;font-size:15.4px;line-height:20px;color:#295fdb;letter-spacing:0.436px;text-underline-offset:3.500px;">kigyou-prod</div><svg style="left:668.6px;top:631.5px" width="18" height="18" viewBox="0 0 18 18"><circle cx="9" cy="9" r="7.700" fill="none" stroke="#00802f" stroke-width="2.100"/><path d="M5.300 9.300l2.700 2.600 4.800-5.200" fill="none" stroke="#00802f" stroke-width="2.100"/></svg>
<div class="t" style="left:691px;top:629.8px;font-size:15.4px;line-height:20px;color:#00802f;letter-spacing:-0.165px;">利用可能</div><div class="t" style="left:802px;top:630.8px;font-size:15.4px;line-height:20px;color:#0f141a;letter-spacing:-0.315px;">インスタンス</div><div class="t" style="left:960px;top:630.8px;font-size:15.4px;line-height:20px;color:#0f141a;letter-spacing:-0.215px;">PostgreSQL</div><div class="t" style="left:1197px;top:630.8px;font-size:15.4px;line-height:20px;color:#0f141a;letter-spacing:0.367px;">ap-northeast-1a</div><div class="t" style="left:1402px;top:630.8px;font-size:15.4px;line-height:20px;color:#0f141a;letter-spacing:0.413px;">db.t3.medium</div><div class="abs" style="left:1769px;top:635.9px;width:57px;height:10px;border:1px solid #c9c9d0;background:#fff"></div>
<div class="abs" style="left:1769px;top:635.9px;width:4.5885px;height:10px;background:#436b8e"></div>
<div class="abs" style="left:1814px;top:636.9px;width:1px;height:8px;background:#e46a6a"></div>
<div class="t" style="left:1830px;top:630.8px;font-size:15.4px;line-height:20px;color:#0f141a;width:47px;overflow:hidden;">8.05%</div><div class="t u" style="left:347px;top:676.5px;font-size:15.4px;line-height:20px;color:#295fdb;letter-spacing:0.405px;text-underline-offset:3.500px;">kigyou-stg</div><svg style="left:668.6px;top:680.4px" width="18" height="18" viewBox="0 0 18 18"><circle cx="9" cy="9" r="7.700" fill="none" stroke="#00802f" stroke-width="2.100"/><path d="M5.300 9.300l2.700 2.600 4.800-5.200" fill="none" stroke="#00802f" stroke-width="2.100"/></svg>
<div class="t" style="left:691px;top:678.7px;font-size:15.4px;line-height:20px;color:#00802f;letter-spacing:-0.165px;">利用可能</div><div class="t" style="left:802px;top:679.7px;font-size:15.4px;line-height:20px;color:#0f141a;letter-spacing:-0.315px;">インスタンス</div><div class="t" style="left:960px;top:679.7px;font-size:15.4px;line-height:20px;color:#0f141a;letter-spacing:-0.215px;">PostgreSQL</div><div class="t" style="left:1197px;top:679.7px;font-size:15.4px;line-height:20px;color:#0f141a;letter-spacing:0.367px;">ap-northeast-1a</div><div class="t" style="left:1402px;top:679.7px;font-size:15.4px;line-height:20px;color:#0f141a;letter-spacing:0.368px;">db.t3.micro</div><div class="abs" style="left:1769px;top:684.8px;width:57px;height:10px;border:1px solid #c9c9d0;background:#fff"></div>
<div class="abs" style="left:1769px;top:684.8px;width:3.2433px;height:10px;background:#436b8e"></div>
<div class="abs" style="left:1814px;top:685.8px;width:1px;height:8px;background:#e46a6a"></div>
<div class="t" style="left:1830px;top:679.7px;font-size:15.4px;line-height:20px;color:#0f141a;width:47px;overflow:hidden;">5.69%</div><div class="abs" style="left:1549px;top:632.8px;width:12.700px;height:13.700px;background:#d4622a"></div>
<div class="t u" style="left:1567px;top:629.8px;font-size:15.4px;line-height:20px;color:#295fdb;letter-spacing:-0.094px;text-underline-offset:3.500px;">1 中</div><svg style="left:337.500px;top:718px" width="9" height="10" viewBox="0 0 9 10"><path d="M.8 5L8.200.5v9z" fill="#8a8a8a"/></svg>
<div class="abs" style="left:403px;top:718.500px;width:959px;height:9px;border-radius:4.500px;background:#8c8c8c"></div>
<svg style="left:1880.500px;top:718px" width="9" height="10" viewBox="0 0 9 10"><path d="M8.200 5L.8.500v9z" fill="#8a8a8a"/></svg>
<div class="abs" style="left:309.500px;top:509.300px;width:1604px;height:108.200px;border:3px solid #fb0007"></div>
<div class="abs" id="awsfoot"></div>
<svg style="left:17px;top:1004px" width="17" height="17" viewBox="0 0 17 17"><rect x="1" y="1" width="15" height="15" rx="2.500" fill="none" stroke="#fff" stroke-width="1.800"/><path d="M4.500 5.300l3.300 3.200-3.300 3.200" fill="none" stroke="#fff" stroke-width="1.800"/><path d="M9 12h3.800" stroke="#fff" stroke-width="1.800"/></svg>
<div class="t" style="left:40px;top:1003.8px;font-size:13.2px;line-height:17px;color:#fff;font-weight:bold;letter-spacing:-0.461px;">CloudShell</div><div class="t" style="left:133px;top:1004.3px;font-size:13.2px;line-height:17px;color:#fff;font-weight:500;letter-spacing:-0.240px;">フィードバック</div><svg style="left:251px;top:1003px" width="15" height="18" viewBox="0 0 15 18"><path d="M7 1.500H2.500a1 1 0 0 0-1 1v13a1 1 0 0 0 1 1h8a1 1 0 0 0 1-1V11" fill="none" stroke="#fff" stroke-width="1.600"/><path d="M4.500 14h4" stroke="#fff" stroke-width="1.400"/><path d="M10.500 1v7M7.800 5.500l2.700 2.700 2.700-2.700" fill="none" stroke="#fff" stroke-width="1.600"/></svg>
<div class="t" style="left:272px;top:1004.3px;font-size:13.2px;line-height:17px;color:#fff;font-weight:500;letter-spacing:-0.152px;">コンソールモバイルアプリ</div><div class="t" style="left:1279px;top:1003.8px;font-size:13.2px;line-height:17px;color:#dedee3;font-weight:bold;letter-spacing:-0.311px;">© 2025, Amazon Web Services, Inc.</div><div class="t" style="left:1493.5px;top:1004.3px;font-size:13.2px;line-height:17px;color:#dedee3;font-weight:500;letter-spacing:0.037px;clip-path:inset(0 98.500px 0 0);">またはその関連会社</div><div class="t" style="left:1657px;top:1004.3px;font-size:13.2px;line-height:17px;color:#fff;font-weight:500;letter-spacing:0.023px;clip-path:inset(0 0 0 65px);">プライバシー</div><div class="t" style="left:1764px;top:1004.3px;font-size:13.2px;line-height:17px;color:#fff;font-weight:500;letter-spacing:-0.250px;">用語</div><div class="t" style="left:1818px;top:1003.8px;font-size:13.2px;line-height:17px;color:#fff;font-weight:bold;letter-spacing:-0.442px;">Cookie の設定</div><!-- ===== windows taskbar ===== -->
<div class="abs" id="taskbar"></div>
<svg style="left:17px;top:1040px" width="28" height="26" viewBox="0 0 28 26"><defs><linearGradient id="cl" x1="0" y1="0" x2="0" y2="1"><stop offset="0" stop-color="#f4f8ff"/><stop offset="1" stop-color="#a9c6f2"/></linearGradient></defs><circle cx="19" cy="9" r="5" fill="#f6a623"/><path d="M6 24a5 5 0 0 1-.5-10A7 7 0 0 1 19 13.500 5.300 5.300 0 0 1 19.500 24z" fill="url(#cl)" stroke="#9db9e8" stroke-width=".6"/></svg>
<div class="abs" style="left:29px;top:1037px;width:16px;height:16px;border-radius:8px;background:#c42b1c"></div>
<div class="t" style="left:34px;top:1038.0px;font-size:11.5px;line-height:15px;color:#fff;">6</div><div class="t" style="left:49.5px;top:1039.2px;font-size:12px;line-height:16px;color:#1b1b1b;letter-spacing:-0.518px;">26°C</div><div class="t" style="left:49.5px;top:1055.2px;font-size:12px;line-height:16px;color:#5d6470;letter-spacing:0.075px;">Nhiều mây</div><svg style="left:593px;top:1043px" width="24" height="24" viewBox="0 0 24 24"><defs><linearGradient id="wl" x1="0" y1="0" x2="1" y2="1"><stop offset="0" stop-color="#36b6f2"/><stop offset="1" stop-color="#0a72d8"/></linearGradient></defs><rect x="0" y="0" width="11.400" height="11.400" rx="1" fill="url(#wl)"/><rect x="12.600" y="0" width="11.400" height="11.400" rx="1" fill="url(#wl)"/><rect x="0" y="12.600" width="11.400" height="11.400" rx="1" fill="url(#wl)"/><rect x="12.600" y="12.600" width="11.400" height="11.400" rx="1" fill="url(#wl)"/></svg>
<div class="abs" style="left:631px;top:1039px;width:218px;height:32px;border-radius:16px;background:#f3f6fb;border:1px solid #d5dbe6"></div>
<svg style="left:641px;top:1047px" width="16" height="16" viewBox="0 0 16 16"><circle cx="6.700" cy="6.700" r="5" fill="none" stroke="#1b1b1b" stroke-width="1.700"/><path d="M10.500 10.500l4.500 4.500" stroke="#1b1b1b" stroke-width="1.900" stroke-linecap="round"/></svg>
<div class="t" style="left:667px;top:1046.3px;font-size:13.5px;line-height:18px;color:#5a5f69;letter-spacing:-0.233px;">Search</div><div class="abs" style="left:869px;top:1043px;width:16px;height:15px;border-radius:2px;background:#f5f5f5;border:1px solid #d0d0d0"></div>
<div class="abs" style="left:862px;top:1049px;width:18px;height:17px;border-radius:2px;background:linear-gradient(180deg,#3a3a3a,#1a1a1a)"></div>
<svg style="left:905px;top:1043px" width="25" height="25" viewBox="-12 -12 24 24"><circle r="12" fill="#fbbc05"/><path d="M0 0L-10.390 -6A12 12 0 0 1 10.390 -6z" fill="#ea4335"/><path d="M0 0L-10.390 -6A12 12 0 0 0 0 12L5.200 3z" fill="#34a853"/><circle r="5.500" fill="#fff"/><circle r="4.300" fill="#4285f4"/></svg>
<div class="abs" style="left:919.500px;top:1038px;width:15px;height:15px;border-radius:8px;background:#7a8792"></div>
<div class="t" style="left:923.3px;top:1040.5px;font-size:8.5px;line-height:11px;color:#fff;">M</div><svg style="left:949.500px;top:1043px" width="25" height="24" viewBox="0 0 25 24"><path d="M8 .8h9.500a6.500 6.500 0 0 1 6.500 6.500v9a6.500 6.500 0 0 1-6.500 6.500H8.500c-2 0-3.500-.3-5-1.300-1 .5-2 .6-2.800.3.700-.8 1-1.600.9-2.600C.9 18 .8 17 .8 16V8A7.200 7.200 0 0 1 8 .8z" fill="#fff" stroke="#0a68ff" stroke-width="1.500"/></svg>
<div class="t" style="left:953.5px;top:1048.7px;font-size:8.5px;line-height:11px;color:#0a68ff;font-weight:bold;letter-spacing:0.004px;">Zalo</div><div class="abs" style="left:962.500px;top:1036.500px;width:17px;height:17px;border-radius:9px;background:#e81123"></div>
<div class="t" style="left:968px;top:1038.5px;font-size:11px;line-height:14px;color:#fff;">2</div><svg style="left:993px;top:1043px" width="25" height="24" viewBox="0 0 25 24"><path d="M2.500 8L17 20.500M2.500 16L17 3.500" fill="none" stroke="#0b7fc7" stroke-width="4" stroke-linecap="round"/><path d="M17.500 .5L24.500 3.500v17l-7 3z" fill="#2aa8f2"/><path d="M17.500 .5v23l-3-2.500V3z" fill="#1b8fdc"/></svg>
<div class="abs" style="left:1037.500px;top:1043px;width:25px;height:25px;border-radius:13px;background:#1d91e6"></div>
<svg style="left:1041px;top:1048px" width="18" height="14" viewBox="0 0 18 14"><path d="M.5 7h13.500c1-.2 1.500-1.200 1.500-2 .8.300 1.600.3 2.200 0-.3 1.300-1.300 2-2.600 2.200C14 10.800 11 13 7 13 3 13 .8 10.800.5 7z" fill="#fff"/><g fill="#fff"><rect x="2" y="4.200" width="2.200" height="2"/><rect x="4.700" y="4.200" width="2.200" height="2"/><rect x="7.400" y="4.200" width="2.200" height="2"/><rect x="10.100" y="4.200" width="2.200" height="2"/><rect x="4.700" y="1.700" width="2.200" height="2"/><rect x="7.400" y="1.700" width="2.200" height="2"/></g></svg>
<svg style="left:1081px;top:1044.500px" width="26" height="21" viewBox="0 0 26 21"><path d="M5.500 0H26l-5.500 21H0z" fill="#2c6fd1"/><path d="M7.500 5l6 5.500-7.500 5.500" fill="none" stroke="#fff" stroke-width="2.300"/><path d="M13.500 16.500h5.500" stroke="#fff" stroke-width="2.200"/></svg>
<svg style="left:1125px;top:1044px" width="25" height="22" viewBox="0 0 25 22"><path d="M0 2.500A1.500 1.500 0 0 1 1.500 1H8l2.500 2.500h13A1.500 1.500 0 0 1 25 5v3H0z" fill="#e8a317"/><rect x="0" y="5.500" width="25" height="16.500" rx="1.500" fill="#fcd354"/><rect x="5" y="15.500" width="15" height="6.500" fill="#3c8fe0"/><rect x="8" y="17.500" width="9" height="2" rx="1" fill="#1b5fb5"/></svg>
<svg style="left:1168px;top:1041px" width="28" height="27" viewBox="0 0 28 27"><circle cx="14" cy="7.500" r="4.500" fill="#7b83eb"/><circle cx="21.500" cy="9.500" r="3" fill="#5059c9"/><path d="M8 12.500h12v8a6 6 0 0 1-12 0z" fill="#7b83eb"/><path d="M19 13h7v6a4 4 0 0 1-7 2z" fill="#5059c9"/><rect x="1.500" y="10.500" width="12" height="12" rx="1.500" fill="#4b53bc"/><path d="M4.500 13.500h6M7.500 13.500v6.500" stroke="#fff" stroke-width="1.800"/><circle cx="21" cy="6" r="6" fill="#13a10e" stroke="#dfe7f1" stroke-width="1"/><path d="M18 6l2.200 2.200 3.800-4" fill="none" stroke="#fff" stroke-width="1.600"/></svg>
<svg style="left:1213px;top:1042px" width="26" height="27" viewBox="0 0 26 27"><path d="M5 3C8 .5 12 .8 14 2.500c2.500-2 7-1.500 9 1.500 1.800 3 1 8-1.500 11.500-.8 1.200-.5 2.500 1 2.800-1.500 1.700-4.500 1.200-5-1l-.5 5.500c-.3 3-4 3-4.300 0l-.4-7C9 18 6 17 5 13.500 3.500 10 2.800 5.500 5 3z" fill="#336791"/><path d="M14 3c1.500 2.500 1.500 8 .5 12" fill="none" stroke="#dfe7f1" stroke-width=".9"/><circle cx="9" cy="7.500" r=".9" fill="#fff"/></svg>
<svg style="left:1257.5px;top:1043px" width="25" height="25" viewBox="-12 -12 24 24"><circle r="12" fill="#fbbc05"/><path d="M0 0L-10.390 -6A12 12 0 0 1 10.390 -6z" fill="#ea4335"/><path d="M0 0L-10.390 -6A12 12 0 0 0 0 12L5.200 3z" fill="#34a853"/><circle r="5.500" fill="#fff"/><circle r="4.300" fill="#4285f4"/></svg>
<div class="abs" style="left:1272px;top:1037.500px;width:15px;height:15px;border-radius:8px;background:radial-gradient(circle at 45% 40%,#d9c9a8 0,#8a9a6a 55%,#5f6f4f 100%)"></div>
<svg style="left:1301px;top:1041.500px" width="26" height="20" viewBox="0 0 26 20"><defs><linearGradient id="cp1" x1="0" y1="0" x2="1" y2=".6"><stop offset="0" stop-color="#25b3f5"/><stop offset=".45" stop-color="#5a78f0"/><stop offset="1" stop-color="#ee5fb8"/></linearGradient><linearGradient id="cp2" x1="0" y1="0" x2=".4" y2="1"><stop offset="0" stop-color="#1fc0c8"/><stop offset=".55" stop-color="#5fd06a"/><stop offset="1" stop-color="#f5c12e"/></linearGradient></defs><path d="M8.500 1H17q2.800 0 3.700 2.800l3.700 11q1 3.700-2.600 3.700H14q-2.800 0-3.700-2.800l-3.500-10.500Q5.500 1 8.500 1z" fill="url(#cp1)"/><path d="M4.800 5h5.400l3.600 10.700q.9 2.800-2 2.800H4q-3.600 0-2.600-3.500l1.600-7Q3.700 5 4.800 5z" fill="url(#cp2)"/></svg>
<div class="abs" style="left:1304.500px;top:1057.500px;width:22px;height:9.500px;border-radius:1.500px;background:#111"></div>
<div class="t" style="left:1305.5px;top:1057.6px;font-size:7.5px;line-height:10px;color:#fff;font-weight:bold;letter-spacing:0.353px;">M365</div><div class="abs" style="left:914.5px;top:1071px;width:6px;height:3px;border-radius:1.500px;background:#858b96"></div>
<div class="abs" style="left:959px;top:1071px;width:6px;height:3px;border-radius:1.500px;background:#858b96"></div>
<div class="abs" style="left:1002.5px;top:1071px;width:6px;height:3px;border-radius:1.500px;background:#858b96"></div>
<div class="abs" style="left:1047px;top:1071px;width:6px;height:3px;border-radius:1.500px;background:#858b96"></div>
<div class="abs" style="left:1090.5px;top:1071px;width:6px;height:3px;border-radius:1.500px;background:#858b96"></div>
<div class="abs" style="left:1134.5px;top:1071px;width:6px;height:3px;border-radius:1.500px;background:#858b96"></div>
<div class="abs" style="left:1178.5px;top:1071px;width:6px;height:3px;border-radius:1.500px;background:#858b96"></div>
<div class="abs" style="left:1223px;top:1071px;width:6px;height:3px;border-radius:1.500px;background:#858b96"></div>
<div class="abs" style="left:1267px;top:1071px;width:6px;height:3px;border-radius:1.500px;background:#858b96"></div>
<div class="abs" style="left:1310.5px;top:1071px;width:6px;height:3px;border-radius:1.500px;background:#858b96"></div>
<div class="abs" style="left:1603px;top:1036px;width:30px;height:38px;border-radius:4px;background:#f0f3f9;border:1px solid #e6eaf2"></div>
<svg style="left:1612px;top:1051px" width="12" height="8" viewBox="0 0 12 8"><path d="M1.200 1.500L6 6.200l4.800-4.700" fill="none" stroke="#1b1b1b" stroke-width="1.500" stroke-linecap="round" stroke-linejoin="round"/></svg>
<svg style="left:1641px;top:1049px" width="18" height="12" viewBox="0 0 18 12"><path d="M4.500 11.500a3.800 3.800 0 0 1-.6-7.500A5.200 5.200 0 0 1 13.700 3.200 4.200 4.200 0 0 1 13.800 11.500z" fill="#4a4a4a"/><path d="M6.500 11.500a3.500 3.500 0 0 1 2-6.200 4.500 4.500 0 0 1 6.500 1.700 2.500 2.500 0 0 1-.8 4.500z" fill="#6e6e6e"/></svg>
<svg style="left:1673px;top:1049px" width="18" height="12" viewBox="0 0 18 12"><path d="M4.500 11.500a3.800 3.800 0 0 1-.6-7.500A5.200 5.200 0 0 1 13.700 3.200 4.200 4.200 0 0 1 13.800 11.500z" fill="#1066c9"/><path d="M6.500 11.500a3.500 3.500 0 0 1 2-6.200 4.500 4.500 0 0 1 6.500 1.700 2.500 2.500 0 0 1-.8 4.500z" fill="#2f95ea"/></svg>
<div class="t" style="left:1707.3px;top:1041.4px;font-size:21.5px;line-height:28px;color:#1b1b1b;transform:scaleX(0.9691);transform-origin:0 50%;">A</div><svg style="left:1743px;top:1046px" width="18" height="18" viewBox="0 0 18 18"><circle cx="9" cy="9" r="8" fill="none" stroke="#1b1b1b" stroke-width="1.200"/><path d="M12 3.800v5.700a3.300 3.300 0 0 1-6.300 1.300" fill="none" stroke="#1b1b1b" stroke-width="1.200"/></svg>
<svg style="left:1781px;top:1046px" width="18" height="18" viewBox="0 0 18 18"><path d="M11.500 2.500H1.500v10h10" fill="none" stroke="#1b1b1b" stroke-width="1.200"/><path d="M4 16.500h6M7 12.500v4" stroke="#1b1b1b" stroke-width="1.200"/><rect x="12.500" y="1" width="3.500" height="4" rx="1" fill="none" stroke="#1b1b1b" stroke-width="1.100"/><path d="M14.250 5v10.500" stroke="#1b1b1b" stroke-width="1.200"/></svg>
<svg style="left:1805px;top:1047px" width="19" height="16" viewBox="0 0 19 16"><path d="M1 5.500h3L8 2v12L4 10.500H1z" fill="none" stroke="#1b1b1b" stroke-width="1.200" stroke-linejoin="round"/><path d="M10.500 5.500a3.500 3.500 0 0 1 0 5M12.800 3.500a6.300 6.300 0 0 1 0 9M15.200 1.700a9 9 0 0 1 0 12.600" fill="none" stroke="#1b1b1b" stroke-width="1.100" stroke-linecap="round"/></svg>
<div class="t" style="left:1870.5px;top:1039.2px;font-size:12px;line-height:16px;color:#1b1b1b;letter-spacing:-0.118px;">15:36</div><div class="t" style="left:1839px;top:1055.5px;font-size:12px;line-height:16px;color:#1b1b1b;letter-spacing:0.192px;">06/11/2025</div><div class="abs" style="left:1514px;top:849.500px;width:208px;height:168px;border-radius:8px;background:linear-gradient(180deg,#f9f9f9 0%,#f6f6f7 55%,#e9ebef 100%);border:1px solid #e3e3e6;box-shadow:0 4px 14px rgba(0,0,0,.14)"></div>
<div class="abs" style="left:1639px;top:895px;width:38px;height:38px;border-radius:4px;background:#fbfbfb;border:1px solid #efefef"></div>
<svg style="left:1529.5px;top:866.8px" width="17" height="14" viewBox="0 0 18 14"><path d="M.5 7h13.500c1-.2 1.500-1.200 1.500-2 .8.300 1.600.3 2.200 0-.3 1.300-1.300 2-2.600 2.200C14 10.800 11 13 7 13 3 13 .8 10.800.5 7z" fill="#111"/><g fill="#111"><rect x="2" y="4.200" width="2.200" height="2"/><rect x="4.700" y="4.200" width="2.200" height="2"/><rect x="7.400" y="4.200" width="2.200" height="2"/><rect x="10.100" y="4.200" width="2.200" height="2"/><rect x="7.400" y="1.700" width="2.200" height="2"/></g></svg>
<div class="abs" style="left:1570px;top:865.8px;width:16px;height:16px;border-radius:6px;background:#fff;border:1.500px solid #0a68ff"></div>
<div class="t" style="left:1572px;top:870.1px;font-size:6px;line-height:8px;color:#0a68ff;font-weight:bold;letter-spacing:-0.098px;">Zalo</div><div class="abs" style="left:1580px;top:866px;width:6px;height:6px;border-radius:3px;background:#f04040"></div>
<svg style="left:1610px;top:866.8px" width="16" height="14" viewBox="0 0 16 14"><rect x="2.500" y="0" width="11" height="4" rx="1" fill="#2a2a2a"/><rect x="0" y="3" width="16" height="8" rx="1.500" fill="#2f3338"/><rect x="3" y="7.500" width="10" height="6" fill="#fff" stroke="#2a2a2a" stroke-width="1"/><path d="M5.500 4.800h5l-2.500 2z" fill="#fff"/></svg>
<svg style="left:1650px;top:865.8px" width="16" height="16" viewBox="0 0 16 16"><rect width="16" height="16" fill="#0f8a1d"/><circle cx="5.500" cy="5.500" r="3.300" fill="#0f8a1d" stroke="#fff" stroke-width="1.100"/><path d="M3.800 5.500l1.300 1.300 2.300-2.500" fill="none" stroke="#fff" stroke-width="1"/><rect x="6.500" y="10" width="6.500" height="3.500" fill="#fff"/><rect x="10" y="3.500" width="3" height="3" fill="#fff"/><path d="M11.500 6.500v3.500" stroke="#fff" stroke-width="1"/></svg>
<svg style="left:1689.7px;top:865.8px" width="16" height="16" viewBox="0 0 16 16"><rect x="4" y="1" width="12" height="14" rx="1.500" fill="#c05fd6"/><rect x="10" y="1" width="6" height="4.700" fill="#d98ae8"/><rect x="10" y="10.300" width="6" height="4.700" fill="#8a2da5"/><rect x="0" y="3.500" width="9.500" height="9.500" rx="1.200" fill="#7719aa"/><text x="4.750" y="11" font-size="7.500" font-weight="bold" fill="#fff" text-anchor="middle" font-family="Liberation Sans, sans-serif">N</text></svg>
<svg style="left:1530px;top:906px" width="16" height="16" viewBox="0 0 16 16"><rect width="16" height="16" fill="#e9d9cc"/><g stroke="#d3202a" stroke-width="1.700" stroke-linecap="round"><path d="M2.500 4l8 8.500M4 2l9 9.500M7 1.500l7.500 8M2 7.500l6 6.500M10.500 1.500l4 4.500"/></g></svg>
<svg style="left:1570px;top:905.5px" width="16" height="12.500" viewBox="0 0 26 20"><path d="M8.500 1H17q2.800 0 3.700 2.800l3.700 11q1 3.700-2.600 3.700H14q-2.800 0-3.700-2.800l-3.500-10.500Q5.500 1 8.500 1z" fill="url(#cp1)"/><path d="M4.800 5h5.400l3.600 10.700q.9 2.800-2 2.800H4q-3.600 0-2.600-3.500l1.600-7Q3.700 5 4.800 5z" fill="url(#cp2)"/></svg>
<div class="abs" style="left:1575.500px;top:917.500px;width:11px;height:5px;border-radius:1px;background:#111"></div>
<div class="t" style="left:1576.3px;top:917.8px;font-size:3.8px;line-height:5px;color:#fff;font-weight:bold;letter-spacing:0.057px;">M365</div><svg style="left:1609.5px;top:906px" width="17" height="16" viewBox="0 0 28 27"><circle cx="12" cy="6" r="4.500" fill="#7b83eb"/><circle cx="21" cy="8" r="3" fill="#5059c9"/><path d="M7 12h12v8a6 6 0 0 1-12 0z" fill="#7b83eb"/><rect x="0" y="9.500" width="13" height="13" rx="1.500" fill="#4b53bc"/><path d="M3.500 13h6M6.500 13v7" stroke="#fff" stroke-width="2"/><circle cx="20.500" cy="19" r="7" fill="#13a10e" stroke="#f6f6f7" stroke-width="1.200"/><path d="M17 19l2.500 2.500 4.500-4.700" fill="none" stroke="#fff" stroke-width="2"/></svg>
<svg style="left:1650px;top:906px" width="16" height="16" viewBox="0 0 16 16"><circle cx="8" cy="8" r="8" fill="#7a1fa8"/><path d="M4 11.500c-.5-3 1.500-4 2.500-6.500.8 1.200 1 2 1 3 1-1.200 2-3 2-4.800 2 1.700 3.200 5.300 1.500 8.300z" fill="#ff9a1f"/><path d="M6 11.500c0-1.500 1-2 1.800-3.200.8 1 1.700 1.800 1.500 3.200z" fill="#ffd54a"/></svg>
<div class="abs" style="left:1689.7px;top:906px;width:16px;height:16px;border-radius:2px;background:#fbe9ea;border:1.500px solid #d9534f"></div>
<div class="t" style="left:1693px;top:906.1px;font-size:13px;line-height:17px;color:#d9332e;font-weight:bold;transform:scaleX(1.0955);transform-origin:0 50%;">V</div><svg style="left:1531px;top:945.2px" width="14" height="17" viewBox="0 0 14 17"><rect x="2.500" y=".6" width="5" height="4" fill="none" stroke="#111" stroke-width="1.100"/><rect x="1" y="4.600" width="8" height="11" rx="1.200" fill="#fff" stroke="#111" stroke-width="1.200"/><path d="M4 2.500h.8M5.800 2.500h.8" stroke="#111" stroke-width="1"/><path d="M8 13.500l2 2 3.500-4" fill="none" stroke="#444" stroke-width="1.100"/></svg>
<svg style="left:1570px;top:945.7px" width="16" height="16" viewBox="0 0 16 16"><circle cx="8" cy="8" r="8" fill="#f3b23a"/><rect x="3.500" y="2.500" width="9" height="12" rx="1" fill="#1d8f8a"/><rect x="4.800" y="4" width="6.400" height="9" fill="#f7f3e8"/><path d="M5.800 6h4.400M5.800 8h4.400M5.800 10h3" stroke="#c2528b" stroke-width=".9"/><path d="M10 11l3-4" stroke="#e2574c" stroke-width="1.300"/></svg>
<svg style="left:1610px;top:947.7px" width="16" height="12" viewBox="0 0 16 12"><path d="M5.500 10.800a4.700 4.700 0 0 1-.5-9.400 5.200 5.200 0 0 1 6 0 4.700 4.700 0 0 1-.5 9.400z" fill="none" stroke="#111" stroke-width="1.400"/><path d="M4.800 8.500a2.600 2.600 0 0 1 1.500-4.800c1.500 0 2.200 1 3.400 2.200M11.200 3.800a2.600 2.600 0 0 1-1.500 4.800c-1.500 0-2.200-1-3.400-2.200" fill="none" stroke="#111" stroke-width="1.300"/></svg>
<svg style="left:1651px;top:945.7px" width="14" height="16" viewBox="0 0 14 16"><path d="M7 .5l6.500 2v5.500c0 4-3 6.500-6.500 7.500C3.500 14.500.5 12 .5 8V2.500z" fill="#d7263d"/><path d="M3.500 10l3.500-5 3.500 5M5 10l2-2.500L9 10" fill="none" stroke="#fff" stroke-width="1.200"/></svg>
<svg style="left:1689.7px;top:945.2px" width="16" height="17" viewBox="0 0 16 17"><path d="M7 .5l6.500 2.200v5.300c0 4-3 6.500-6.500 7.800C3.500 14.500.5 12 .5 8V2.700z" fill="#1b8fe3"/><path d="M7 .5l6.500 2.200v5.300c0 4-3 6.500-6.500 7.800z" fill="#0e5fb3"/><path d="M11.500 8.500l4.300 8h-8.600z" fill="#ffc800"/><path d="M11.500 11.500v2.500M11.500 15v.8" stroke="#111" stroke-width="1"/></svg>
<svg style="left:1530px;top:985.7px" width="16" height="16" viewBox="0 0 16 16"><rect width="16" height="16" fill="#111"/><path d="M3 8.200c1.500-2.500 4-3.500 6.500-3.200v1.200C8 6 6 6.800 5 8.300c1 1.500 2.500 2 4.500 1.700v1.300C6.500 11.800 4.200 10.500 3 8.200z" fill="#76b900"/><path d="M6.500 5v6.500h6.500V5z" fill="none" stroke="#76b900" stroke-width="1"/><circle cx="8.500" cy="8.200" r="1.200" fill="#76b900"/></svg>
<svg style="left:1570px;top:985.7px" width="16" height="16" viewBox="0 0 16 16"><circle cx="8" cy="8" r="8" fill="#2f7fd6"/><rect x="4" y="4.500" width="8" height="6" rx=".8" fill="#fff"/><path d="M5 9.500l3.500-3.500h2.500z" fill="#2f7fd6" opacity=".6"/><path d="M6 12h4" stroke="#fff" stroke-width="1"/></svg>
</body>
</html>
